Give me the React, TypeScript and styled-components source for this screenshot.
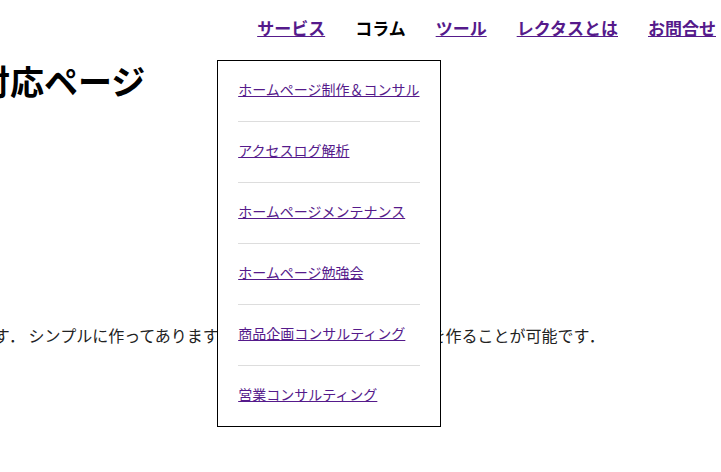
import React from "react";
import styled, { createGlobalStyle } from "styled-components";

const GlobalStyle = createGlobalStyle`
  html {
    overflow: hidden;
  }
  body {
    margin: 0;
    padding: 0;
    background: #fff;
    font-family: "Noto Sans CJK JP", "Noto Sans", sans-serif;
    color: #222;
  }
`;

const columnMenu = [
  "ホームページ制作＆コンサル",
  "アクセスログ解析",
  "ホームページメンテナンス",
  "ホームページ勉強会",
  "商品企画コンサルティング",
  "営業コンサルティング",
];

const navItems = [
  { label: "サービス", current: false },
  { label: "コラム", current: true },
  { label: "ツール", current: false },
  { label: "レクタスとは", current: false },
  { label: "お問合せ", current: false },
];

const App: React.FC = () => {
  return (
    <>
      <GlobalStyle />
      <Page>
        <Header>
          <Nav>
            {navItems.map((item) => (
              <NavItem key={item.label}>
                <NavLink href="#" $current={item.current}>
                  {item.label}
                </NavLink>
                {item.current && (
                  <Dropdown>
                    {columnMenu.map((m) => (
                      <DropItem key={m}>
                        <DropLink href="#">{m}</DropLink>
                      </DropItem>
                    ))}
                  </Dropdown>
                )}
              </NavItem>
            ))}
          </Nav>
        </Header>
        <Title>対応ページ</Title>
        <Text>
          ページです． シンプルに作ってあります．自由にデザインした ページを作ることが可能です．
        </Text>
      </Page>
    </>
  );
};

const Page = styled.div`
  width: 800px;
  min-height: 472px;
  margin-left: -60px;
`;

const Header = styled.header`
  display: flex;
  justify-content: flex-end;
  padding: 16px 24px 0 0;
`;

const Nav = styled.ul`
  display: flex;
  gap: 30px;
  list-style: none;
  margin: 0;
  padding: 0;
`;

const NavItem = styled.li`
  position: relative;
  line-height: 24px;
`;

const NavLink = styled.a<{ $current: boolean }>`
  font-size: 17px;
  font-weight: bold;
  color: ${(p) => (p.$current ? "#000" : "#551a8b")};
  text-decoration: ${(p) => (p.$current ? "none" : "underline")};
`;

const Dropdown = styled.ul`
  position: absolute;
  top: 44px;
  left: -138px;
  width: 182px;
  margin: 0;
  padding: 0 20px;
  list-style: none;
  background: #fff;
  border: 1px solid #000;
  z-index: 10;
`;

const DropItem = styled.li`
  padding: 18px 0 22px;
  font-size: 14px;
  line-height: 20px;
  border-bottom: 1px solid #ddd;
  &:last-child {
    border-bottom: none;
  }
`;

const DropLink = styled.a`
  color: #551a8b;
  text-decoration: underline;
  white-space: nowrap;
`;

const Title = styled.h1`
  margin: 21px 0 0;
  padding-left: 36px;
  font-size: 34px;
  line-height: 40px;
  font-weight: bold;
  color: #000;
`;

const Text = styled.p`
  margin: 222px 0 0;
  text-indent: -10px;
  font-size: 16px;
  line-height: 24px;
  white-space: nowrap;
  color: #222;
`;

export default App;
